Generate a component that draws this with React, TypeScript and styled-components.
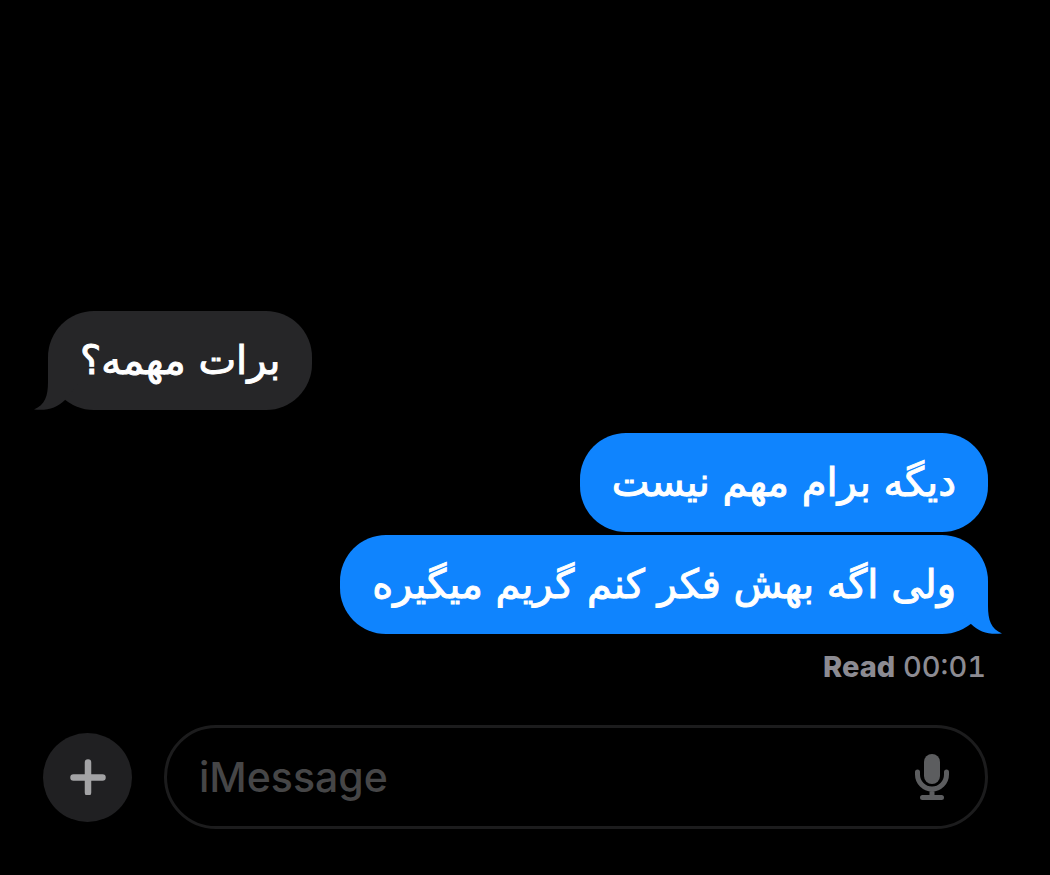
import React from 'react';
import styled, { createGlobalStyle } from 'styled-components';

const GlobalStyle = createGlobalStyle`
  *, *::before, *::after { box-sizing: border-box; }
  body { margin: 0; background: #000; }
`;

const Screen = styled.div`
  min-height: 100vh;
  display: flex;
  flex-direction: column;
  justify-content: flex-end;
  padding: 0 62px 46px 43px;
  background: #000;
  font-family: Inter, 'Liberation Sans', sans-serif;
`;

const Thread = styled.main`
  display: flex;
  flex-direction: column;
  padding-left: 5px;
`;

const Group = styled.section<{ $mine?: boolean }>`
  display: flex;
  flex-direction: column;
  align-items: ${(p) => (p.$mine ? 'flex-end' : 'flex-start')};
  gap: 3px;
  margin-top: 23px;
`;

const Bubble = styled.div<{ $mine?: boolean }>`
  position: relative;
  padding: 21px 32px 22px;
  border-radius: 46px;
  background: ${(p) => (p.$mine ? '#0f84fe' : '#262628')};
  color: #fff;
`;

const BubbleText = styled.p`
  margin: 0;
  font-family: 'DejaVu Sans', sans-serif;
  font-size: 40px;
  line-height: 56px;
  -webkit-text-stroke: 1px currentColor;
`;

const TailShape = styled.svg<{ $mine?: boolean }>`
  position: absolute;
  bottom: 0;
  ${(p) => (p.$mine ? 'right: -14px; transform: scaleX(-1);' : 'left: -14px;')}
  fill: ${(p) => (p.$mine ? '#0f84fe' : '#262628')};
`;

const Receipt = styled.p`
  margin: 16px 2px 41px;
  align-self: flex-end;
  font-size: 29px;
  font-weight: 500;
  line-height: 34px;
  font-optical-sizing: none;
  font-variant-numeric: tabular-nums;
  color: #8c8b92;
`;

const ReceiptStatus = styled.strong`
  font-weight: 800;
`;

const Composer = styled.form`
  display: flex;
  align-items: center;
  gap: 32px;
`;

const AddButton = styled.button`
  display: grid;
  place-items: center;
  flex: none;
  width: 89px;
  height: 89px;
  padding: 0;
  border: 0;
  border-radius: 50%;
  background: #202022;
`;

const Field = styled.div`
  flex: 1;
  min-width: 0;
  display: flex;
  align-items: center;
  height: 104px;
  padding: 0 36px 0 32px;
  border: 3px solid #1c1c1d;
  border-radius: 52px;
`;

const MessageInput = styled.input`
  flex: 1;
  min-width: 0;
  padding: 0;
  border: 0;
  outline: 0;
  background: transparent;
  color: #fff;
  font: 500 41px/50px Inter, 'Liberation Sans', sans-serif;
  &::placeholder { color: #464647; opacity: 1; }
`;

const MicButton = styled.button`
  display: block;
  padding: 0;
  border: 0;
  background: transparent;
`;

function Tail({ mine }: { mine?: boolean }) {
  return (
    <TailShape $mine={mine} width="44" height="50" viewBox="0 0 44 50" aria-hidden="true">
      <path d="M14 4V22C14 36 11 45 0 49.500C13 51 23 48 31 40L44 24V4Z" />
    </TailShape>
  );
}

function Message({ text, mine, last }: { text: string; mine?: boolean; last?: boolean }) {
  return (
    <Bubble $mine={mine}>
      {last && <Tail mine={mine} />}
      <BubbleText dir="rtl" lang="fa">{text}</BubbleText>
    </Bubble>
  );
}

export default function App() {
  return (
    <>
      <GlobalStyle />
      <Screen>
        <Thread>
          <Group>
            <Message text="برات مهمه؟" last />
          </Group>
          <Group $mine>
            <Message mine text="دیگه برام مهم نیست" />
            <Message mine last text="ولی اگه بهش فکر کنم گریم میگیره" />
          </Group>
          <Receipt><ReceiptStatus>Read</ReceiptStatus> 00:01</Receipt>
        </Thread>
        <Composer onSubmit={(e) => e.preventDefault()}>
          <AddButton type="button" aria-label="Add attachment">
            <svg width="36" height="36" viewBox="0 0 36 36" fill="none" stroke="#a3a3a5" strokeWidth="6.5" strokeLinecap="round" aria-hidden="true">
              <path d="M18 3.500V33.500M3.500 18.500H32.500" />
            </svg>
          </AddButton>
          <Field>
            <MessageInput type="text" aria-label="iMessage" placeholder="iMessage" />
            <MicButton type="button" aria-label="Dictate">
              <svg width="34" height="48" viewBox="0 0 34 48" fill="none" stroke="#5c5d5f" strokeWidth="5" strokeLinecap="round" aria-hidden="true">
                <rect x="9" y="2" width="16" height="30" rx="8" fill="#5c5d5f" stroke="none" />
                <path d="M2.500 20V22.500A14.500 14.500 0 0 0 31.500 22.500V20M17 38V45M7.500 45.500H26.500" />
              </svg>
            </MicButton>
          </Field>
        </Composer>
      </Screen>
    </>
  );
}
